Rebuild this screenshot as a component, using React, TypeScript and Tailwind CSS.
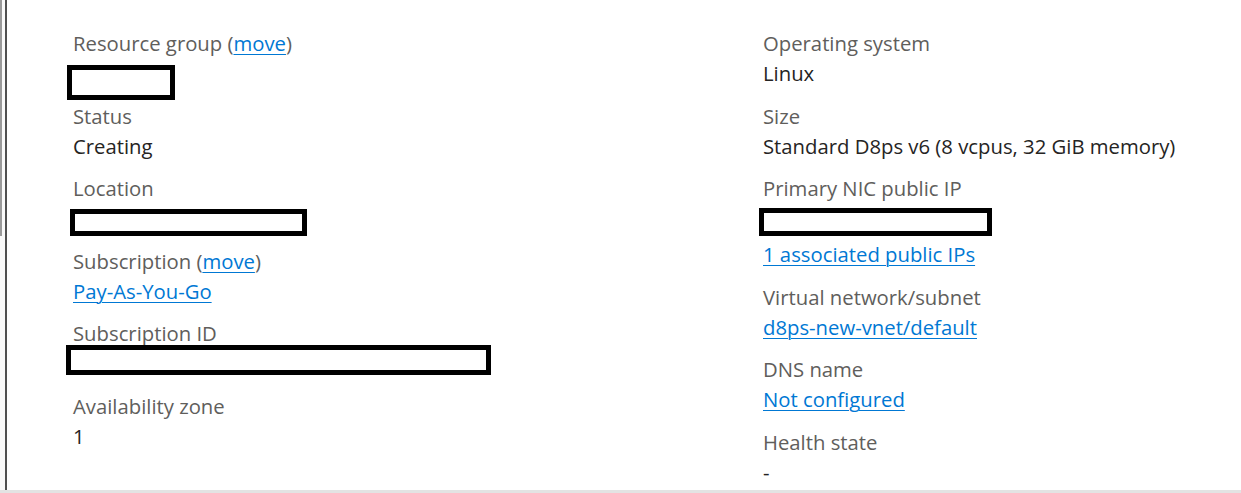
import React from 'react';

type Field = {
    label: React.ReactNode;
    value?: React.ReactNode;
    extra?: React.ReactNode;
};

// black redaction box laid over the value line
function Redacted({ className }: { className: string }) {
    return <div className={`absolute border-[5px] border-black bg-white ${className}`} />;
}

function Link({ children }: { children: React.ReactNode }) {
    return <a className="text-[#0078d4] underline underline-offset-[3px] decoration-1 cursor-pointer">{children}</a>;
}

function FieldBlock({ field }: { field: Field }) {
    return (
        <div className="flex flex-col">
            <div className="h-[30px] leading-[30px] text-[#605e5c] whitespace-nowrap">{field.label}</div>
            <div className="relative h-[30px] leading-[30px] text-[#252423] whitespace-nowrap">{field.value}</div>
            {field.extra}
        </div>
    );
}

const LEFT: Field[] = [
    {
        label: <>Resource group (<Link>move</Link>)</>,
        value: <Redacted className="left-[-6px] top-[7px] w-[108px] h-[35px]" />,
    },
    { label: 'Status', value: 'Creating' },
    {
        label: 'Location',
        value: <Redacted className="left-[-3px] top-[6px] w-[237px] h-[27px]" />,
    },
    { label: <>Subscription (<Link>move</Link>)</>, value: <Link>Pay-As-You-Go</Link> },
    {
        label: 'Subscription ID',
        value: <Redacted className="left-[-7px] top-[-3px] w-[425px] h-[30px]" />,
    },
    { label: 'Availability zone', value: '1' },
];

const RIGHT: Field[] = [
    { label: 'Operating system', value: 'Linux' },
    { label: 'Size', value: 'Standard D8ps v6 (8 vcpus, 32 GiB memory)' },
    {
        label: 'Primary NIC public IP',
        value: <Redacted className="left-[-4px] top-[5px] w-[233px] h-[28px]" />,
        extra: (
            <div className="mt-[6px] h-[30px] leading-[30px] whitespace-nowrap">
                <Link>1 associated public IPs</Link>
            </div>
        ),
    },
    { label: 'Virtual network/subnet', value: <Link>d8ps-new-vnet/default</Link> },
    { label: 'DNS name', value: <Link>Not configured</Link> },
    { label: 'Health state', value: '-' },
];

export default function App() {
    return (
        <div
            className="flex flex-col w-[1241px] h-[493px] bg-white overflow-hidden text-[20.3px]"
            style={{ fontFamily: '"Segoe UI", "Open Sans", sans-serif' }}
        >
            <div className="flex flex-1 min-h-0">
                {/* left gutter with scrollbar thumb */}
                <div className="w-[5px] bg-[#fafafa] flex">
                    <div className="w-[2px] h-[236px] bg-[#9a9a9a]" />
                </div>
                <div className="w-[2px] bg-[#505050]" />

                {/* essentials grid */}
                <div className="flex-1 grid grid-cols-[690px_1fr] pl-[66px] pt-[28px]">
                    <div className="flex flex-col gap-[12.6px]">
                        {LEFT.map((f, i) => (
                            <FieldBlock key={i} field={f} />
                        ))}
                    </div>
                    <div className="flex flex-col gap-[12.6px]">
                        {RIGHT.map((f, i) => (
                            <FieldBlock key={i} field={f} />
                        ))}
                    </div>
                </div>
            </div>
            <div className="h-[3px] bg-[#e3e3e3]" />
        </div>
    );
}
